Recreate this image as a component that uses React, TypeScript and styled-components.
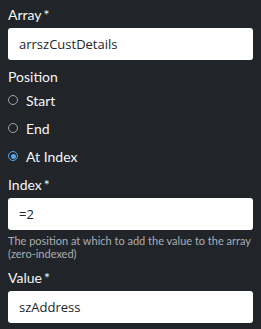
import styled, { createGlobalStyle } from "styled-components";

const Global = createGlobalStyle`
  html, body {
    margin: 0;
    padding: 0;
    background: #212529;
  }
`;

const Panel = styled.div`
  width: 261px;
  height: 329px;
  box-sizing: border-box;
  padding: 6px 8px 0 8px;
  background: #212529;
  font-family: Lato, "Noto Sans", sans-serif;
  color: #f4f5f6;
  overflow: hidden;
`;

const Label = styled.label<{ $gap?: number }>`
  display: block;
  font-size: 14px;
  line-height: 18px;
  margin-top: ${(p) => p.$gap ?? 0}px;
  margin-bottom: 4px;
  color: #f4f5f6;
`;

const Star = styled.span`
  margin-left: 2px;
`;

const Input = styled.input`
  display: block;
  width: 100%;
  height: 32px;
  box-sizing: border-box;
  border: none;
  border-radius: 3px;
  background: #ffffff;
  padding: 0 11px;
  font-family: "Open Sans", sans-serif;
  font-size: 13px;
  color: #212529;
  outline: none;
`;

const RadioGroup = styled.div`
  display: flex;
  flex-direction: column;
  margin-top: -4px;
`;

const RadioRow = styled.div`
  display: flex;
  align-items: center;
  height: 28px;
  gap: 8px;
  font-size: 14px;
`;

const Dot = styled.span<{ $on?: boolean }>`
  width: 10px;
  height: 10px;
  box-sizing: border-box;
  border-radius: 50%;
  border: 1.5px solid ${(p) => (p.$on ? "#5aa7e4" : "#a3a6a9")};
  display: flex;
  align-items: center;
  justify-content: center;
  &::after {
    content: "";
    display: ${(p) => (p.$on ? "block" : "none")};
    width: 5px;
    height: 5px;
    border-radius: 50%;
    background: #5aa7e4;
  }
`;

const Help = styled.div`
  margin-top: 4px;
  font-size: 11px;
  line-height: 13px;
  color: #a9adb1;
`;

const options = ["Start", "End", "At Index"];

export default function App() {
  return (
    <>
      <Global />
      <Panel>
        <Label>
          Array<Star>*</Star>
        </Label>
        <Input defaultValue="arrszCustDetails" />

        <Label $gap={8}>Position</Label>
        <RadioGroup>
          {options.map((o) => (
            <RadioRow key={o}>
              <Dot $on={o === "At Index"} />
              {o}
            </RadioRow>
          ))}
        </RadioGroup>

        <Label $gap={6}>
          Index<Star>*</Star>
        </Label>
        <Input defaultValue="=2" />
        <Help>
          The position at which to add the value to the array (zero-indexed)
        </Help>

        <Label $gap={9}>
          Value<Star>*</Star>
        </Label>
        <Input defaultValue="szAddress" />
      </Panel>
    </>
  );
}
